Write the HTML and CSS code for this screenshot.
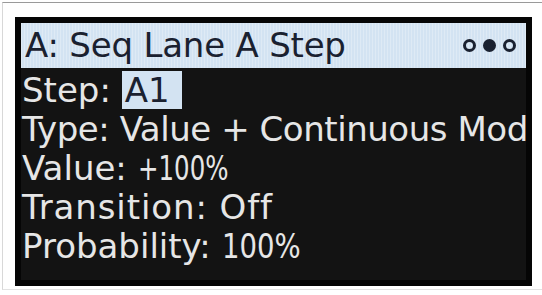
FILE: index.html
```html
<!DOCTYPE html>
<html>
<head>
<meta charset="utf-8">
<link rel="stylesheet" href="styles.css">
</head>
<body>
<div class="frame">
  <div class="screen">
    <div class="header">
      <span class="title">A: Seq Lane A Step</span>
      <span class="dots"><i class="dot"></i><i class="dot on"></i><i class="dot"></i></span>
    </div>
    <div class="rows">
      <div class="row">Step: <span class="sel">A1</span></div>
      <div class="row tight">Type: Value + Continuous Mod</div>
      <div class="row">Value: <span class="num n1">+100%</span></div>
      <div class="row wide">Transition: Off</div>
      <div class="row">Probability: <span class="num n2">100%</span></div>
    </div>
  </div>
</div>
</body>
</html>
```
FILE: styles.css
```css
html, body { margin: 0; padding: 0; background: #fff; }
body { width: 542px; height: 295px; overflow: hidden; }
.frame {
  margin-top: 2px;
  margin-left: 2px;
  height: 288px;
  border-top: 1px solid #9a9a9a;
  border-left: 1px solid #d8d8d8;
  border-bottom: 1px solid #e2e2e2;
  padding: 14px 0 0 12px;
  box-sizing: border-box;
}
.screen {
  width: 517px;
  height: 269px;
  background: #131313;
  border: 6px solid #050505;
  box-sizing: border-box;
  font-family: "DejaVu Sans", sans-serif;
  font-size: 34px;
  color: #e6e6e6;
}
.header {
  height: 45px;
  line-height: 45px;
  background: #d3e3f2;
  background-image: repeating-linear-gradient(90deg, rgba(255,255,255,0.25) 0 1px, rgba(0,0,0,0) 1px 3px);
  color: #1a2130;
  display: flex;
  justify-content: space-between;
  align-items: center;
  padding: 0 10px 0 4px;
}
.title { white-space: nowrap; letter-spacing: -0.2px; }
.dots { display: flex; gap: 7px; align-items: center; }
.dot {
  width: 13px; height: 13px; border-radius: 50%;
  border: 3px solid #1a2130; box-sizing: border-box; display: block;
}
.dot.on { background: #1a2130; }
.rows { padding: 3px 0 0 1px; }
.row { line-height: 39px; height: 39px; white-space: nowrap; }
.tight { letter-spacing: -0.45px; }
.wide { letter-spacing: 0.9px; }
.num { display: inline-block; transform-origin: left center; }
.n1 { transform: scaleX(0.72); }
.n2 { transform: scaleX(0.81); }
.sel {
  background: #d3e3f2; color: #1a2130;
  display: inline-block; line-height: 38px; padding: 0 12px 0 3px;
}
```
